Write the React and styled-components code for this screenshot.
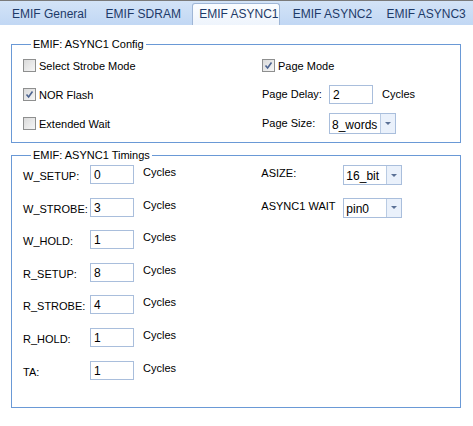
import React from "react";
import styled, { createGlobalStyle } from "styled-components";

const Global = createGlobalStyle`
  html, body {
    margin: 0;
    padding: 0;
    background: #ffffff;
  }
  body {
    font-family: "Liberation Sans", Arial, sans-serif;
    font-size: 11px;
    color: #000;
  }
`;

const Page = styled.div`
  width: 473px;
  height: 426px;
  overflow: hidden;
  background: #fff;
`;

const TabStrip = styled.div`
  height: 25px;
  box-sizing: border-box;
  border-top: 1px solid #7a7a7a;
  background: linear-gradient(#d3e3f7, #c2d8f4);
  display: flex;
  align-items: flex-end;
  padding-left: 5px;
  border-bottom: 1px solid #c2d8f4;
`;

const Tab = styled.div`
  width: 88px;
  margin-right: 6px;
  box-sizing: border-box;
  height: ${(p) => (p.$active ? "22px" : "20px")};
  padding-left: 6px;
  font-size: 12px;
  line-height: ${(p) => (p.$active ? "21px" : "19px")};
  color: #1e3a68;
  white-space: nowrap;
  border: 1px solid ${(p) => (p.$active ? "#9fb6d6" : "transparent")};
  border-bottom: none;
  border-radius: 3px 3px 0 0;
  background: ${(p) => (p.$active ? "linear-gradient(#fbfdff, #eef4fc)" : "transparent")};
  margin-bottom: ${(p) => (p.$active ? "-1px" : "0")};
`;

const Body = styled.div`
  padding: 13px 12px 0 11px;
  display: flex;
  flex-direction: column;
  gap: 6px;
`;

const Group = styled.fieldset`
  margin: 0;
  padding: 0 0 0 11px;
  border: 1px solid #6a99d6;
  border-radius: 0;
  height: ${(p) => p.$h}px;
  box-sizing: border-box;
  min-width: 0;
`;

const Legend = styled.legend`
  padding: 0 2px;
  margin-left: 8px;
  font-size: 11px;
  line-height: 13px;
`;

const ConfigGrid = styled.div`
  display: grid;
  grid-template-columns: 239px 1fr;
  grid-auto-rows: 29px;
`;

const Cell = styled.div`
  display: flex;
  align-items: center;
  white-space: nowrap;
`;

const CheckLabel = styled.label`
  display: flex;
  align-items: center;
  gap: 3px;
`;

const Box = styled.span`
  width: 13px;
  height: 13px;
  box-sizing: border-box;
  border: 1px solid #8e8f8f;
  background: linear-gradient(135deg, #dadada, #f6f6f6);
  display: inline-flex;
  align-items: center;
  justify-content: center;
`;

const Label = styled.span`
  width: ${(p) => p.$w}px;
  flex: none;
  position: relative;
  top: ${(p) => p.$dy || 0}px;
`;

const Input = styled.div`
  width: ${(p) => p.$w || 44}px;
  height: 19px;
  box-sizing: border-box;
  border: 1px solid #a9bedc;
  background: #fff;
  padding-left: 3px;
  font-size: 12px;
  line-height: 19px;
  flex: none;
`;

const Unit = styled.span`
  margin-left: 9px;
  position: relative;
  top: ${(p) => p.$dy || 0}px;
`;

const Combo = styled.div`
  width: ${(p) => p.$w}px;
  height: ${(p) => p.$h || 21}px;
  box-sizing: border-box;
  border: 1px solid #a9bedc;
  background: #fff;
  display: flex;
  flex: none;
  font-size: 12px;
`;

const ComboText = styled.span`
  flex: 1;
  padding-left: 2px;
  display: flex;
  align-items: center;
  padding-top: 2px;
`;

const ComboButton = styled.span`
  width: 14px;
  border-left: 1px solid #b9cbe3;
  background: #eaf1fb;
  display: flex;
  align-items: center;
  justify-content: center;
`;

const Arrow = styled.span`
  width: 0;
  height: 0;
  border-left: 3px solid transparent;
  border-right: 3px solid transparent;
  border-top: 3px solid #5b7196;
`;

const TimingCols = styled.div`
  display: flex;
`;

const Col = styled.div`
  width: ${(p) => p.$w}px;
  display: grid;
  grid-auto-rows: 32.6px;
`;

const TRow = styled.div`
  display: flex;
  align-items: flex-start;
  white-space: nowrap;
  padding-top: 3px;
`;

function Check({ checked, children }) {
  return (
    <CheckLabel>
      <Box>
        {checked && (
          <svg width="9" height="9" viewBox="0 0 9 9">
            <path d="M1.5 4.5 L3.6 7 L7.5 1.5" fill="none" stroke="#4d6490" strokeWidth="1.6" />
          </svg>
        )}
      </Box>
      {children}
    </CheckLabel>
  );
}

function Select({ value, w, h }) {
  return (
    <Combo $w={w} $h={h}>
      <ComboText>{value}</ComboText>
      <ComboButton>
        <Arrow />
      </ComboButton>
    </Combo>
  );
}

const tabs = ["EMIF General", "EMIF SDRAM", "EMIF ASYNC1", "EMIF ASYNC2", "EMIF ASYNC3"];

const timings = [
  ["W_SETUP:", "0"],
  ["W_STROBE:", "3"],
  ["W_HOLD:", "1"],
  ["R_SETUP:", "8"],
  ["R_STROBE:", "4"],
  ["R_HOLD:", "1"],
  ["TA:", "1"],
];

export default function App() {
  return (
    <Page>
      <Global />
      <TabStrip>
        {tabs.map((t, i) => (
          <Tab key={t} $active={i === 2}>
            {t}
          </Tab>
        ))}
      </TabStrip>
      <Body>
        <Group $h={105}>
          <Legend>EMIF: ASYNC1 Config</Legend>
          <ConfigGrid>
            <Cell>
              <Check>Select Strobe Mode</Check>
            </Cell>
            <Cell>
              <Check checked>Page Mode</Check>
            </Cell>
            <Cell>
              <Check checked>NOR Flash</Check>
            </Cell>
            <Cell>
              <Label $w={67} $dy={-1}>Page Delay:</Label>
              <Input>2</Input>
              <Unit $dy={-1}>Cycles</Unit>
            </Cell>
            <Cell>
              <Check>Extended Wait</Check>
            </Cell>
            <Cell>
              <Label $w={67} $dy={-1}>Page Size:</Label>
              <Select value="8_words" w={67} />
            </Cell>
          </ConfigGrid>
        </Group>
        <Group $h={259}>
          <Legend>EMIF: ASYNC1 Timings</Legend>
          <TimingCols>
            <Col $w={240}>
              {timings.map(([l, v]) => (
                <TRow key={l}>
                  <Label $w={67} $dy={5}>{l}</Label>
                  <Input>{v}</Input>
                  <Unit $dy={1}>Cycles</Unit>
                </TRow>
              ))}
            </Col>
            <Col $w={200}>
              <TRow>
                <Label $w={82} $dy={2}>ASIZE:</Label>
                <Select value="16_bit" w={59} h={20} />
              </TRow>
              <TRow>
                <Label $w={82} $dy={2}>ASYNC1 WAIT</Label>
                <Select value="pin0" w={59} h={20} />
              </TRow>
            </Col>
          </TimingCols>
        </Group>
      </Body>
    </Page>
  );
}
